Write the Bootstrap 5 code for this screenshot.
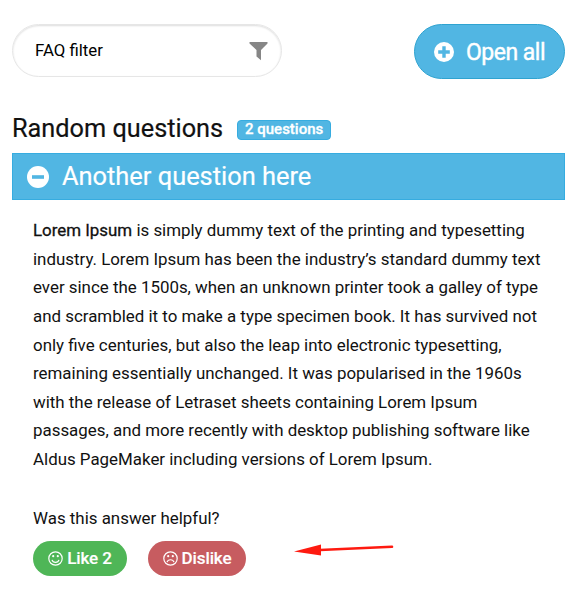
<!DOCTYPE html>
<html lang="en">
<head>
<meta charset="utf-8">
<meta name="viewport" content="width=device-width, initial-scale=1">
<title>FAQ</title>
<link href="https://cdn.jsdelivr.net/npm/bootstrap@5.3.0/dist/css/bootstrap.min.css" rel="stylesheet">
<style>
body{font-family:Roboto,"Liberation Sans",sans-serif;color:#111;background:#fff;height:600px;overflow:hidden}
.faq{padding:24px 10px 0 12px}
.filter-box{width:270px;height:53px;border:1px solid #e6e6e6;padding:0 13px 0 22px;box-shadow:inset 0 1px 2px #ddd}
.filter-box input{font-size:16.8px;color:#000;outline:0;width:180px;margin-top:1px}
.btn-open{width:151px;height:55px;background:#51b6e3;border:1px solid #2fa3d0;color:#fff;font-size:23px;letter-spacing:-.5px;padding:3px 0 0 19px;-webkit-text-stroke:.4px #fff}
.btn-open:hover{background:#42a9d8;color:#fff}
.btn-open svg{margin-top:-3px}
.btn-open span{margin-left:12px;padding-top:1px}
.head-row{height:74px;padding-top:26px}
.faq-title{font-size:25.3px;line-height:32px;font-weight:400;-webkit-text-stroke:.2px #111}
.count{background:#51b6e3;border:1px solid #36ace0;border-radius:4px;height:20px;width:94px;font-size:15px;line-height:17px;margin-left:14px;margin-top:15px;font-weight:500;padding:0;-webkit-text-stroke:.3px #fff}
.question{height:47px;background:#51b6e3;border:1px solid #36ace0;color:#fff;font-size:25.4px;padding:0 0 0 14px;-webkit-text-stroke:.2px #fff}
.question span{margin-left:13px}
.answer{padding:16.400px 0 0 21px;font-size:16.9px;line-height:28.55px;white-space:nowrap}
.answer b{font-weight:400;-webkit-text-stroke:.3px #111}
.helpful{margin-top:30.500px}
.btn-vote{height:35px;color:#fff;font-size:17px;font-weight:500;padding:0;line-height:1;letter-spacing:-.1px;-webkit-text-stroke:.15px #fff}
.like{width:94px;background:#4fb657}.dislike{width:98px;background:#c75c60}
.like:hover,.dislike:hover{color:#fff}
.votes{gap:21px;margin-top:9px}
.pointer{margin-left:27px;margin-top:-17px}
</style>
</head>
<body>
<main class="faq">
  <div class="d-flex justify-content-between align-items-start">
    <label class="filter-box rounded-pill d-flex align-items-center justify-content-between">
      <input class="border-0 p-0 bg-transparent" type="text" value="FAQ filter">
      <svg width="19" height="20" viewBox="0 0 19 20"><path d="M.5 1h18v1.500L12 9v10.200L7.500 15.500V9L.5 2.500z" fill="#868686"/></svg>
    </label>
    <button class="btn btn-open rounded-pill d-flex align-items-center">
      <svg width="20" height="20" viewBox="0 0 20 20"><circle cx="10" cy="10" r="10" fill="#fff"/><path d="M10 4.200v11.600M4.200 10h11.600" stroke="#51b6e3" stroke-width="3.400"/></svg><span>Open all</span>
    </button>
  </div>
  <div class="head-row d-flex align-items-start">
    <h2 class="faq-title mb-0 mt-2">Random questions</h2><span class="badge count">2 questions</span>
  </div>
  <div class="question d-flex align-items-center">
    <svg width="22" height="22" viewBox="0 0 22 22"><circle cx="11" cy="11" r="11" fill="#fff"/><path d="M5 9.200h12v3.600H5z" fill="#51b6e3"/></svg><span>Another question here</span>
  </div>
  <div class="answer">
    <p class="mb-0"><b>Lorem Ipsum</b> is simply dummy text of the printing and typesetting<br>industry. Lorem Ipsum has been the industry’s standard dummy text<br>ever since the 1500s, when an unknown printer took a galley of type<br>and scrambled it to make a type specimen book. It has survived not<br>only five centuries, but also the leap into electronic typesetting,<br>remaining essentially unchanged. It was popularised in the 1960s<br>with the release of Letraset sheets containing Lorem Ipsum<br>passages, and more recently with desktop publishing software like<br>Aldus PageMaker including versions of Lorem Ipsum.</p>
    <p class="helpful mb-0">Was this answer helpful?</p>
    <div class="votes d-flex align-items-center">
      <button class="btn btn-vote like rounded-pill d-flex align-items-center justify-content-center gap-1"><svg width="15" height="15" viewBox="0 0 15 15" fill="none" stroke="#fff" stroke-width="1.200"><circle cx="7.500" cy="7.500" r="6.700"/><path d="M4 8.800c1 3.300 6 3.300 7 0"/><circle cx="5.200" cy="5.200" r=".5"/><circle cx="9.800" cy="5.200" r=".5"/></svg>Like 2</button>
      <button class="btn btn-vote dislike rounded-pill d-flex align-items-center justify-content-center gap-1"><svg width="15" height="15" viewBox="0 0 15 15" fill="none" stroke="#fff" stroke-width="1.200"><circle cx="7.500" cy="7.500" r="6.700"/><path d="M4 11.200c1-3.300 6-3.300 7 0"/><circle cx="5.200" cy="5.200" r=".5"/><circle cx="9.800" cy="5.200" r=".5"/></svg>Dislike</button>
      <svg class="pointer" width="101" height="14" viewBox="0 0 101 14"><path d="M26 7 98 3.700" stroke="#fe1a10" stroke-width="2.600" stroke-linecap="round"/><path d="M0 8.500 27 1.500V12.500z" fill="#fe1a10"/></svg>
    </div>
  </div>
</main>
<script src="https://cdn.jsdelivr.net/npm/bootstrap@5.3.0/dist/js/bootstrap.bundle.min.js"></script>
</body>
</html>
